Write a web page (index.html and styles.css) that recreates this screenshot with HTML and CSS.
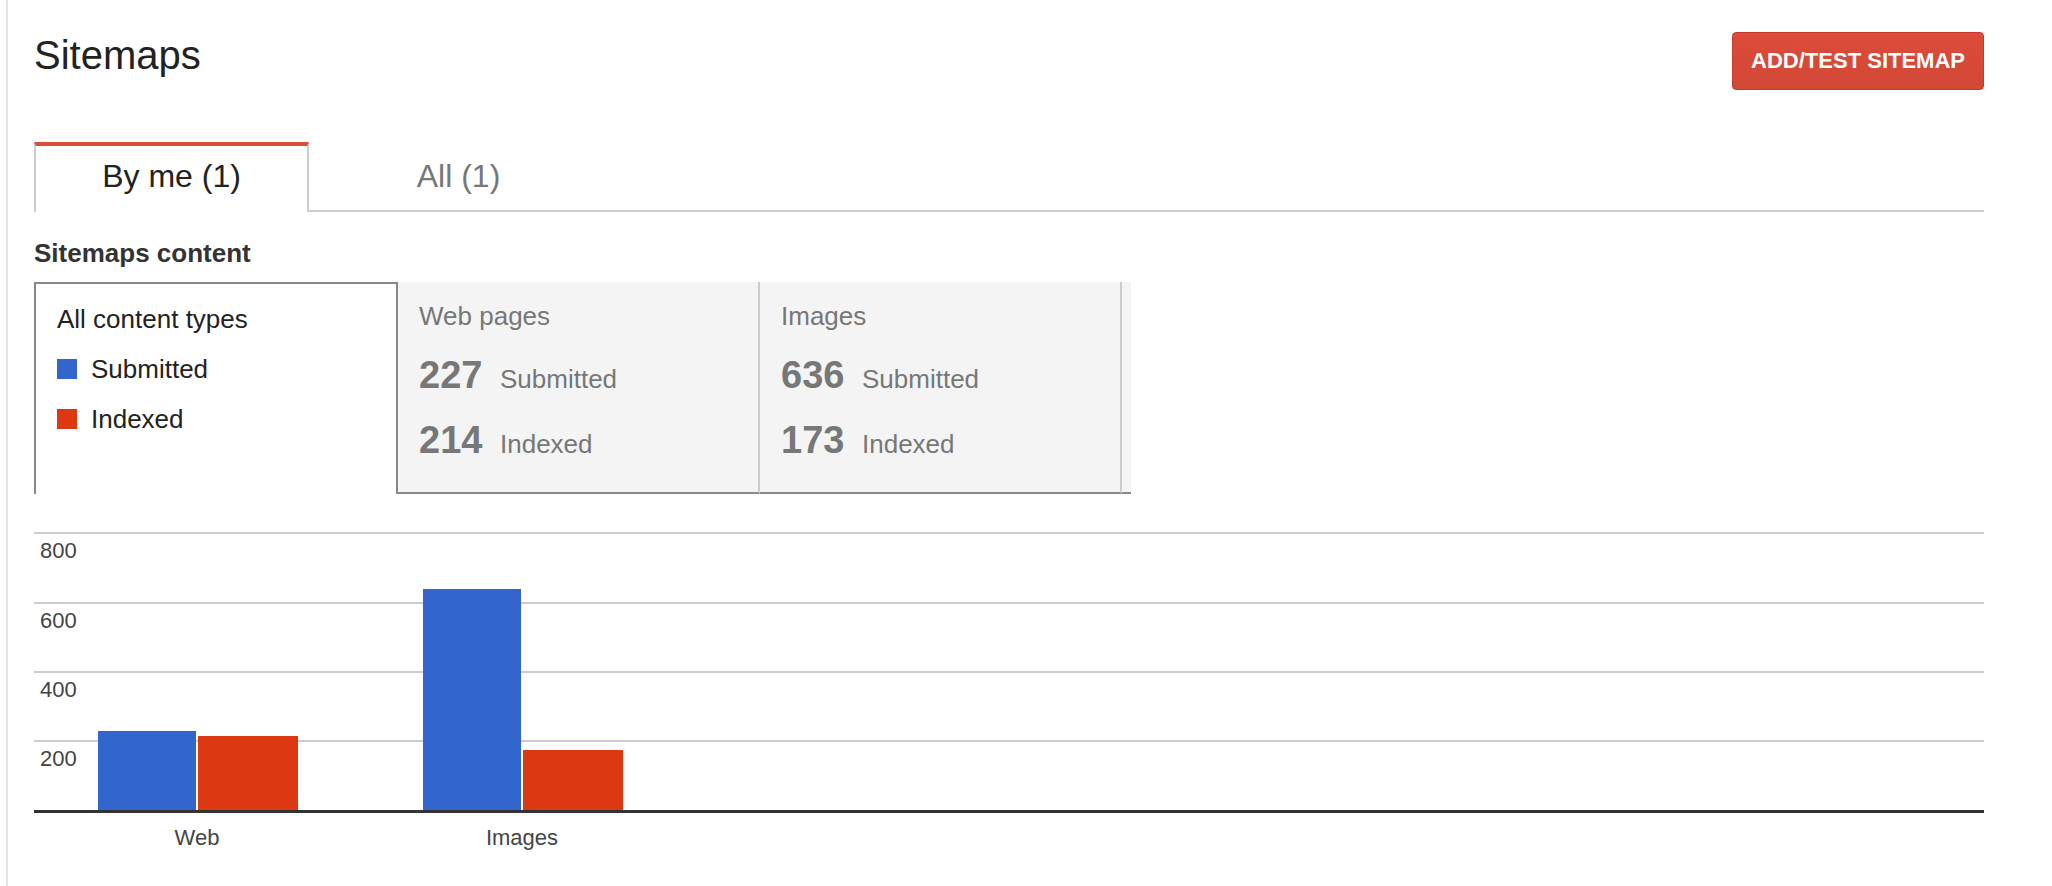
FILE: index.html
```html
<!DOCTYPE html>
<html>
<head>
<meta charset="utf-8">
<title>Sitemaps</title>
<link rel="stylesheet" href="styles.css">
</head>
<body>
<div class="page">
  <div class="header">
    <h1 class="title">Sitemaps</h1>
    <button class="btn-red">ADD/TEST SITEMAP</button>
  </div>

  <div class="tabs">
    <div class="tab tab-active">By me (1)</div>
    <div class="tab tab-inactive">All (1)</div>
    <div class="tabs-fill"></div>
  </div>

  <h2 class="section-title">Sitemaps content</h2>

  <div class="ct">
    <div class="ct-all">
      <div class="legend-title">All content types</div>
      <div class="legend-item"><span class="sw sw-blue"></span>Submitted</div>
      <div class="legend-item"><span class="sw sw-red"></span>Indexed</div>
    </div>
    <div class="ct-item">
      <div class="ct-name">Web pages</div>
      <div class="ct-row ct-row-first"><span class="ct-num">227</span><span class="ct-label">Submitted</span></div>
      <div class="ct-row"><span class="ct-num">214</span><span class="ct-label">Indexed</span></div>
    </div>
    <div class="ct-item">
      <div class="ct-name">Images</div>
      <div class="ct-row ct-row-first"><span class="ct-num">636</span><span class="ct-label">Submitted</span></div>
      <div class="ct-row"><span class="ct-num">173</span><span class="ct-label">Indexed</span></div>
    </div>
    <div class="ct-fill"></div>
  </div>

  <svg class="chart" width="1950" height="366" viewBox="0 0 1950 366">
    <rect class="grid" x="0" y="12" width="1950" height="2"/>
    <rect class="grid" x="0" y="82" width="1950" height="2"/>
    <rect class="grid" x="0" y="151" width="1950" height="2"/>
    <rect class="grid" x="0" y="220" width="1950" height="2"/>
    <text class="axis" x="6" y="38">800</text>
    <text class="axis" x="6" y="108">600</text>
    <text class="axis" x="6" y="177">400</text>
    <text class="axis" x="6" y="246">200</text>
    <rect class="bar-blue" x="64" y="211" width="98" height="79"/>
    <rect class="bar-red" x="164" y="216" width="100" height="74"/>
    <rect class="bar-blue" x="389" y="69" width="98" height="221"/>
    <rect class="bar-red" x="489" y="230" width="100" height="60"/>
    <rect class="base" x="0" y="290" width="1950" height="3"/>
    <text class="axis" x="163" y="325" text-anchor="middle">Web</text>
    <text class="axis" x="488" y="325" text-anchor="middle">Images</text>
  </svg>
</div>
</body>
</html>
```

FILE: styles.css
```css
html, body {
  margin: 0;
  padding: 0;
  background: #fff;
}

body {
  font-family: "Liberation Sans", Arial, sans-serif;
  color: #222;
}

.page {
  margin-left: 6px;
  border-left: 2px solid #e5e5e5;
  min-height: 886px;
  box-sizing: border-box;
  padding: 32px 68px 0 26px;
}

.header {
  display: flex;
  justify-content: space-between;
  align-items: flex-start;
}

.title {
  margin: 0;
  font-size: 40px;
  line-height: 46px;
  font-weight: normal;
  color: #222;
}

.btn-red {
  height: 58px;
  box-sizing: border-box;
  padding: 0 18px;
  border: 1px solid #c6392a;
  border-radius: 4px;
  background: linear-gradient(#dd4b39, #d14836);
  color: #fff;
  font-family: "Liberation Sans", Arial, sans-serif;
  font-weight: bold;
  font-size: 22px;
  line-height: 56px;
  letter-spacing: 0;
}

.tabs {
  display: flex;
  margin-top: 52px;
}

.tab {
  box-sizing: border-box;
  text-align: center;
  font-size: 32px;
  line-height: 40px;
}

.tab-active {
  width: 275px;
  border-top: 4px solid #dd4b39;
  border-left: 2px solid #ccc;
  border-right: 2px solid #ccc;
  padding: 10px 0 16px;
  color: #222;
}

.tab-inactive {
  width: 299px;
  padding: 14px 0;
  border-bottom: 2px solid #ccc;
  color: #777;
}

.tabs-fill {
  flex: 1;
  border-bottom: 2px solid #ccc;
}

.section-title {
  margin: 26px 0 0;
  font-size: 26px;
  line-height: 30px;
  font-weight: bold;
  color: #333;
}

.ct {
  display: flex;
  margin-top: 14px;
  height: 212px;
}

.ct-all {
  width: 364px;
  box-sizing: border-box;
  border: 2px solid #888;
  border-bottom: none;
  background: #fff;
  padding: 20px 21px 0;
}

.legend-title {
  font-size: 26px;
  line-height: 30px;
  color: #222;
}

.legend-item {
  display: flex;
  align-items: center;
  margin-top: 20px;
  font-size: 26px;
  line-height: 30px;
  color: #222;
}

.sw {
  width: 20px;
  height: 20px;
  margin-right: 14px;
}

.sw-blue { background: #3366cc; }
.sw-red { background: #dc3912; }

.ct-item {
  width: 362px;
  box-sizing: border-box;
  background: #f4f4f4;
  border-bottom: 2px solid #888;
  border-right: 2px solid #ccc;
  padding: 19px 21px 0;
  color: #777;
}

.ct-name {
  font-size: 26px;
  line-height: 30px;
}

.ct-row {
  display: flex;
  align-items: baseline;
  margin-top: 21px;
}

.ct-row-first {
  margin-top: 22px;
}

.ct-num {
  width: 81px;
  font-size: 38px;
  line-height: 44px;
  font-weight: bold;
}

.ct-label {
  font-size: 26px;
  line-height: 30px;
}

.ct-fill {
  width: 9px;
  background: #f4f4f4;
  border-bottom: 2px solid #888;
}

.chart {
  display: block;
  margin-top: 26px;
}

.chart .grid { fill: #cccccc; }
.chart .base { fill: #333333; }
.chart .bar-blue { fill: #3366cc; }
.chart .bar-red { fill: #dc3912; }

.chart .axis {
  font-family: "Liberation Sans", Arial, sans-serif;
  font-size: 22px;
  fill: #444;
}
```
